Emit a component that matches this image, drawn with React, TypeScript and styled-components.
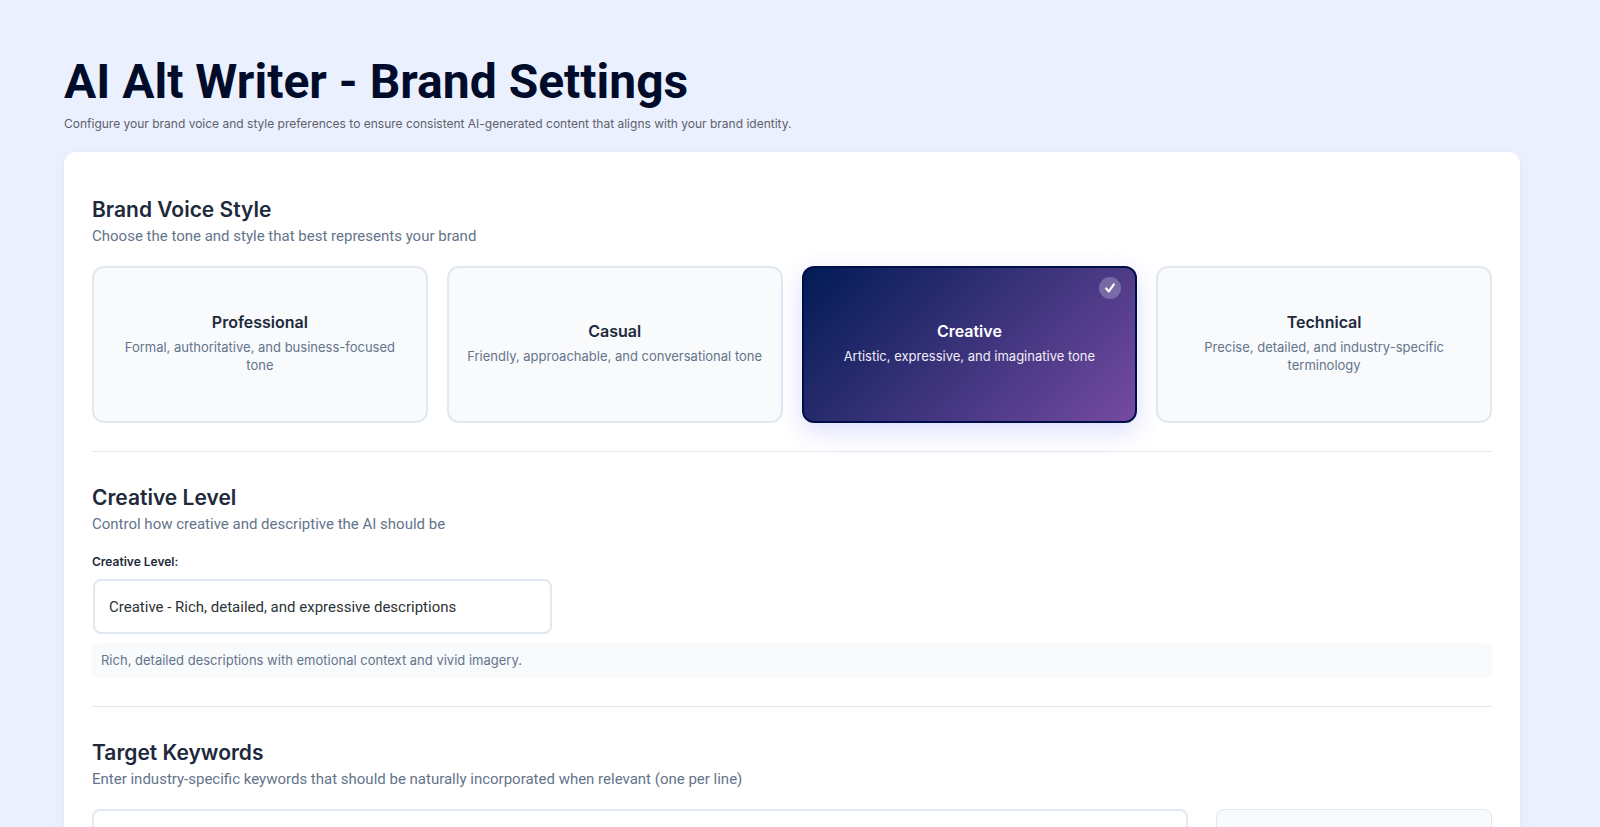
import React, { useState } from "react";
import styled, { createGlobalStyle } from "styled-components";

const GlobalStyle = createGlobalStyle`
  *, *::before, *::after { box-sizing: border-box; }
  html { scrollbar-width: none; }
  body {
    margin: 0;
    background: #ebf0ff;
    color: #1e293b;
    font-family: Inter, "Liberation Sans", sans-serif;
  }
`;

const Page = styled.main`
  padding: 56px 80px 56px 64px;
`;

const PageTitle = styled.h1`
  margin: 0;
  color: #000c2a;
  font-family: Roboto, Inter, sans-serif;
  font-size: 48px;
  font-weight: 700;
  line-height: 52px;
`;

const PageIntro = styled.p`
  margin: 8px 0 20px;
  color: #5c616b;
  font-size: 12px;
  line-height: 16px;
`;

const Panel = styled.div`
  padding: 12px 28px 28px;
  border-radius: 12px;
  background: #fff;
  box-shadow:
    0 1px 3px rgba(30, 41, 100, 0.05),
    0 4px 16px rgba(30, 41, 130, 0.04);
`;

const Section = styled.section`
  padding: 32px 0 28px;

  & + & {
    border-top: 1px solid #e2e8f0;
  }
`;

const SectionTitle = styled.h2`
  margin: 0;
  font-size: 21px;
  font-weight: 600;
  line-height: 28px;
`;

const SectionHint = styled.p`
  margin: 0 0 17px;
  color: #64748b;
  font-family: Roboto, Inter, sans-serif;
  font-size: 15px;
  line-height: 25px;
`;

const VoiceGrid = styled.div`
  display: grid;
  grid-template-columns: repeat(4, 1fr);
  gap: 19px;
`;

const VoiceCard = styled.button<{ $selected: boolean }>`
  position: relative;
  display: flex;
  flex-direction: column;
  align-items: center;
  justify-content: center;
  gap: 4px;
  min-height: 157px;
  padding: 14px 18px 20px;
  border: 2px solid ${(p) => (p.$selected ? "#000f4a" : "#e2e8f0")};
  border-radius: 12px;
  background: ${(p) =>
    p.$selected
      ? "linear-gradient(135deg, #001b54 0%, #764ba2 100%) border-box"
      : "#f8fafc"};
  box-shadow: ${(p) =>
    p.$selected ? "0 8px 24px rgba(80, 80, 240, 0.2)" : "none"};
  color: ${(p) => (p.$selected ? "#fff" : "#1e293b")};
  font-family: inherit;
  text-align: center;
  cursor: pointer;
`;

const VoiceName = styled.span`
  font-size: 16px;
  font-weight: 600;
  line-height: 24px;
`;

const VoiceText = styled.span<{ $selected: boolean }>`
  color: ${(p) => (p.$selected ? "#f1edf7" : "#64748b")};
  font-size: 13px;
  line-height: 18px;
`;

const CheckBadge = styled.span`
  position: absolute;
  top: 9px;
  right: 14px;
  display: flex;
  align-items: center;
  justify-content: center;
  width: 22px;
  height: 22px;
  border-radius: 50%;
  background: rgba(255, 255, 255, 0.24);
`;

const FieldLabel = styled.label`
  display: block;
  margin-bottom: 9px;
  font-size: 12px;
  font-weight: 600;
  line-height: 16px;
`;

const LevelSelect = styled.select`
  display: block;
  appearance: none;
  width: 459px;
  max-width: 100%;
  height: 55px;
  margin-left: 1px;
  padding: 0 14px;
  border: 2px solid #e2e8f0;
  border-radius: 8px;
  background: #fff;
  color: #2c3338;
  font-family: Roboto, Inter, sans-serif;
  font-size: 15px;
`;

const LevelNote = styled.p`
  margin: 9px 0 0;
  padding: 8px 9px;
  border-radius: 6px;
  background: #f8fafc;
  color: #64748b;
  font-size: 13px;
  line-height: 19px;
`;

const KeywordRow = styled.div`
  display: grid;
  grid-template-columns: 1fr 276px;
  gap: 28px;
`;

const KeywordInput = styled.textarea`
  display: block;
  width: 100%;
  min-height: 180px;
  padding: 14px;
  border: 2px solid #e2e8f0;
  border-radius: 8px;
  background: #fff;
  font-family: inherit;
  font-size: 15px;
  resize: vertical;
`;

const KeywordAside = styled.aside`
  border: 1px solid #e2e8f0;
  border-radius: 8px;
  background: #f8fafc;
`;

const voices = [
  { name: "Professional", text: "Formal, authoritative, and business-focused tone" },
  { name: "Casual", text: "Friendly, approachable, and conversational tone" },
  { name: "Creative", text: "Artistic, expressive, and imaginative tone" },
  { name: "Technical", text: "Precise, detailed, and industry-specific terminology" },
];

const CheckIcon = () => (
  <svg width="12" height="12" viewBox="0 0 12 12" aria-hidden="true">
    <path
      d="M2.2 6.4 4.9 9.4 9.8 2.4"
      fill="none"
      stroke="#fff"
      strokeWidth="2.2"
      strokeLinecap="round"
      strokeLinejoin="round"
    />
  </svg>
);

export default function App() {
  const [voice, setVoice] = useState("Creative");

  return (
    <>
      <GlobalStyle />
      <Page>
        <PageTitle>AI Alt Writer - Brand Settings</PageTitle>
        <PageIntro>
          Configure your brand voice and style preferences to ensure consistent
          AI-generated content that aligns with your brand identity.
        </PageIntro>
        <Panel>
          <Section>
            <SectionTitle>Brand Voice Style</SectionTitle>
            <SectionHint>
              Choose the tone and style that best represents your brand
            </SectionHint>
            <VoiceGrid>
              {voices.map(({ name, text }) => (
                <VoiceCard
                  key={name}
                  type="button"
                  $selected={voice === name}
                  aria-pressed={voice === name}
                  onClick={() => setVoice(name)}
                >
                  <VoiceName>{name}</VoiceName>
                  <VoiceText $selected={voice === name}>{text}</VoiceText>
                  {voice === name && (
                    <CheckBadge>
                      <CheckIcon />
                    </CheckBadge>
                  )}
                </VoiceCard>
              ))}
            </VoiceGrid>
          </Section>
          <Section>
            <SectionTitle>Creative Level</SectionTitle>
            <SectionHint>
              Control how creative and descriptive the AI should be
            </SectionHint>
            <FieldLabel htmlFor="creative-level">Creative Level:</FieldLabel>
            <LevelSelect id="creative-level">
              <option>Creative - Rich, detailed, and expressive descriptions</option>
            </LevelSelect>
            <LevelNote>
              Rich, detailed descriptions with emotional context and vivid imagery.
            </LevelNote>
          </Section>
          <Section>
            <SectionTitle id="keywords-title">Target Keywords</SectionTitle>
            <SectionHint>
              Enter industry-specific keywords that should be naturally
              incorporated when relevant (one per line)
            </SectionHint>
            <KeywordRow>
              <KeywordInput aria-labelledby="keywords-title" />
              <KeywordAside />
            </KeywordRow>
          </Section>
        </Panel>
      </Page>
    </>
  );
}
